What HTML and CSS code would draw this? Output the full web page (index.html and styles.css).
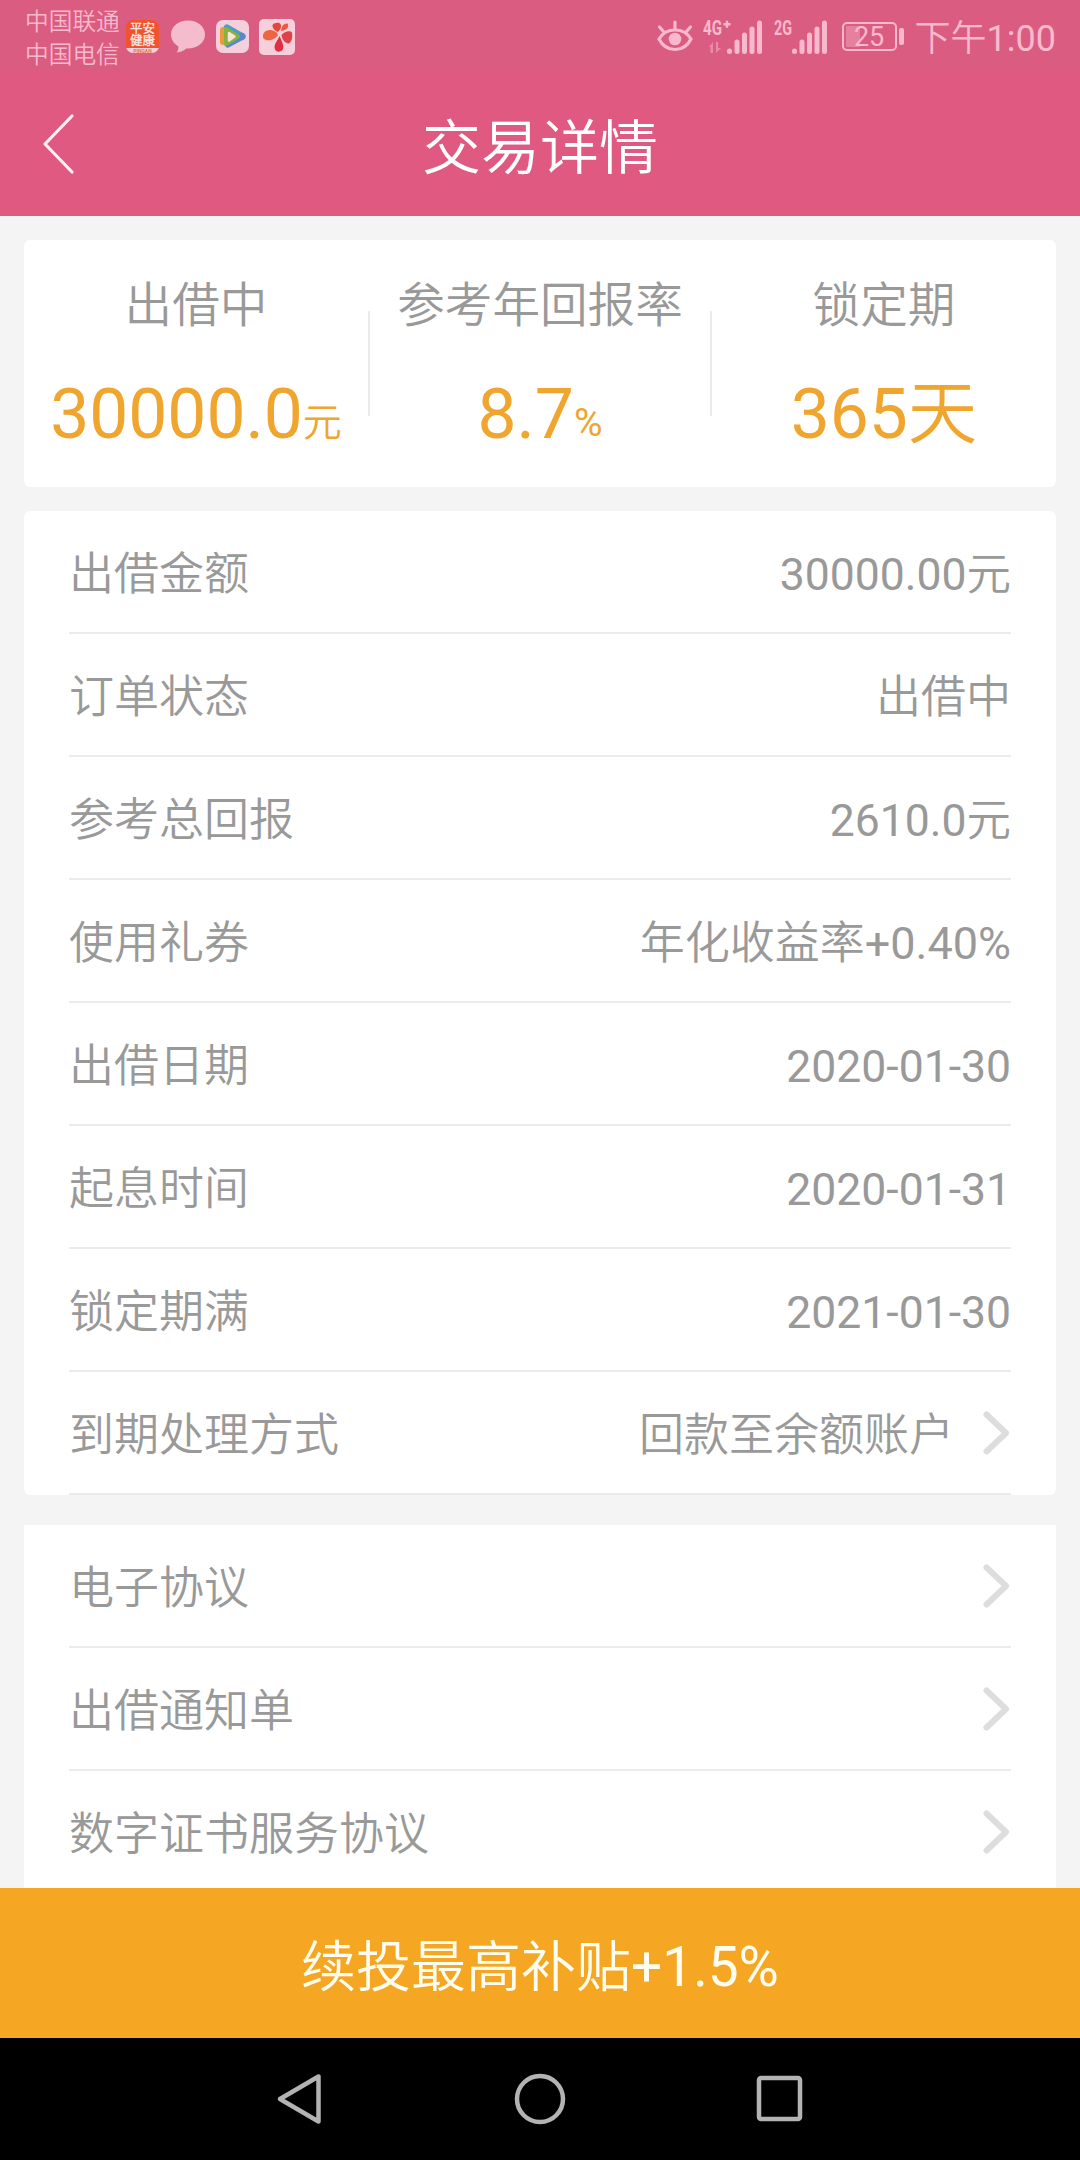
FILE: index.html
```html
<!DOCTYPE html>
<html lang="zh-CN">
<head>
  <meta charset="UTF-8" />
  <meta name="viewport" content="width=device-width, initial-scale=1.0" />
  <title>交易详情</title>
  <link rel="stylesheet" href="styles.css">
</head>
<body>

<div class="status-bar">
  <div class="carriers">
    <span>中国联通</span>
    <span>中国电信</span>
  </div>

  <div class="notifications">
    <div class="app-health">
      <span>平安</span>
      <span>健康</span>
      <small>PINGAN</small>
    </div>
    <svg class="bubble" width="34" height="33" viewBox="0 0 34 33">
      <path d="M17 0.5C7.500 0.500 0 6.500 0 14.500C0 19.500 2.800 23.700 7.300 26.200C7.600 28.500 7 30.500 5.800 32.600C9.500 32.200 13 30.700 15.300 28.600C26 29 34 22.800 34 14.500C34 6.500 26.500 0.500 17 0.500Z" fill="#f4bccd"/>
    </svg>
    <svg class="player" width="33" height="33" viewBox="0 0 33 33">
      <rect width="33" height="33" rx="7" fill="#f6cfdc"/>
      <path d="M11 8L26 16.500" stroke="#4f9bc4" stroke-width="7" stroke-linecap="round"/>
      <path d="M26 16.500L12 24" stroke="#5a86cc" stroke-width="7" stroke-linecap="round"/>
      <path d="M7 10V22" stroke="#ee9a3c" stroke-width="6" stroke-linecap="round"/>
      <path d="M10 9L22 16.500L10 24Z" fill="#86b23e" stroke="#86b23e" stroke-width="4" stroke-linejoin="round"/>
      <path d="M13 13L18.500 16.500L13 20.500Z" fill="#f9e3d8" stroke="#f9e3d8" stroke-width="2.500" stroke-linejoin="round"/>
    </svg>
    <svg class="pinwheel" width="36" height="36" viewBox="0 0 36 36">
      <rect width="36" height="36" rx="5" fill="#f6cfdc"/>
      <path d="M19 13C16 12 13 9 13.500 6C15 3.500 20 3 21.500 5C23 8 21 11 19 13Z" fill="#e2493b"/>
      <path d="M22 12C22.500 8 24 4 28.500 4.500C30.500 8 28 11 22 12Z" fill="#ea5a3c"/>
      <path d="M19 16C16 21 8 23 4.500 19.500C2.500 15 6 10.500 12 11C16 12 18 13 19 16Z" fill="#ee6640"/>
      <path d="M22.500 16C26 12 31 11.500 33 13.500C34 18 32.500 23 30 24.500C25 24 23 20 22.500 16Z" fill="#dd4348"/>
      <path d="M20.500 17C22 21 26 27 23.500 31C20.500 34 15.500 33 15.500 28C16 23 19 21 20.500 17Z" fill="#e0303f"/>
    </svg>
  </div>

  <div class="system">
    <svg class="eye" width="36" height="33" viewBox="0 0 36 33">
      <g fill="none" stroke="#f8b9ce" stroke-width="3.200" stroke-linecap="round">
        <path d="M2 19C9 7 27 7 34 19C27 33 9 33 2 19Z"/>
        <path d="M18 2V9M2.500 7L7 12M33.500 7L29 12"/>
      </g>
      <circle cx="18" cy="19" r="6.300" fill="#f8b9ce"/>
    </svg>
    <svg class="signal-4g" width="60" height="42" viewBox="0 -4 60 42">
      <text x="0" y="15" textLength="19" lengthAdjust="spacingAndGlyphs">4G</text>
      <path d="M20.500 4.300H27.500M24 0.800V7.800" class="plus"/>
      <path d="M6 27L10 22V33H7.500V27ZM15 22V28H18L13 33V22Z" fill="#e88aa8"/>
      <path d="M26.500 31.500V31M34 31.500V22M41.500 31.500V15M49 31.500V9M56.500 31.500V3" class="bars"/>
    </svg>
    <svg class="signal-2g" width="54" height="42" viewBox="0 -4 54 42">
      <text x="0" y="15" textLength="18" lengthAdjust="spacingAndGlyphs">2G</text>
      <path d="M20.500 31.500V31M28 31.500V22M35.500 31.500V15M43 31.500V9M50.500 31.500V3" class="bars"/>
    </svg>
    <div class="battery"><span>25</span></div>
    <div class="time">下午1:00</div>
  </div>
</div>

<header class="title-bar">
  <svg class="back" width="36" height="64" viewBox="0 0 36 64">
    <path d="M31 4L4 32L31 60" fill="none" stroke="#fff0f5" stroke-width="3.200" stroke-linecap="round" stroke-linejoin="round"/>
  </svg>
  <h1>交易详情</h1>
</header>

<main>
  <section class="card summary">
    <div class="item">
      <p>出借中</p>
      <strong>30000.0<small>元</small></strong>
    </div>
    <div class="item">
      <p>参考年回报率</p>
      <strong>8.7<small>%</small></strong>
    </div>
    <div class="item">
      <p>锁定期</p>
      <strong>365天</strong>
    </div>
  </section>

  <ul class="card details">
    <li><span>出借金额</span><span class="num">30000.00元</span></li>
    <li><span>订单状态</span><span>出借中</span></li>
    <li><span>参考总回报</span><span class="num">2610.0元</span></li>
    <li><span>使用礼券</span><span>年化收益率+0.40%</span></li>
    <li><span>出借日期</span><span class="num">2020-01-30</span></li>
    <li><span>起息时间</span><span class="num">2020-01-31</span></li>
    <li><span>锁定期满</span><span class="num">2021-01-30</span></li>
    <li>
      <span>到期处理方式</span><span>回款至余额账户</span>
      <svg class="arrow" width="28" height="44" viewBox="0 0 28 44"><path d="M3.500 3.500L23 22L3.500 40.500"/></svg>
    </li>
  </ul>

  <ul class="card links">
    <li><span>电子协议</span><svg class="arrow" width="28" height="44" viewBox="0 0 28 44"><path d="M3.500 3.500L23 22L3.500 40.500"/></svg></li>
    <li><span>出借通知单</span><svg class="arrow" width="28" height="44" viewBox="0 0 28 44"><path d="M3.500 3.500L23 22L3.500 40.500"/></svg></li>
    <li><span>数字证书服务协议</span><svg class="arrow" width="28" height="44" viewBox="0 0 28 44"><path d="M3.500 3.500L23 22L3.500 40.500"/></svg></li>
  </ul>
</main>

<button class="renew">续投最高补贴+1.5%</button>

<nav class="nav-bar">
  <svg width="50" height="54" viewBox="0 0 50 54"><path d="M43.500 4.500V49.500L5 27Z"/></svg>
  <svg width="54" height="54" viewBox="0 0 54 54"><circle cx="27" cy="27" r="23"/></svg>
  <svg width="50" height="50" viewBox="0 0 50 50"><rect x="4" y="4" width="41" height="41" rx="2"/></svg>
</nav>

</body>
</html>
```
FILE: styles.css
```css
:root {
  --pink: #df5980;
  --status: #db5c81;
  --status-text: #f8b9ce;
  --orange: #f5a623;
  --amount: #efa52e;
  --grey: #999;
  --line: #ebebeb;
}

* {
  box-sizing: border-box;
}

body {
  margin: 0;
  height: 2160px;
  display: flex;
  flex-direction: column;
  overflow: hidden;
  background: #f4f4f4;
  color: var(--grey);
  font-family: Roboto, "Noto Sans CJK SC DemiLight", "Noto Sans CJK SC", sans-serif;
}

/* status bar */
.status-bar {
  flex: none;
  height: 72px;
  padding: 0 24px 0 25px;
  display: flex;
  background: var(--status);
  color: var(--status-text);
}

.carriers {
  width: 101px;
  padding-top: 6px;
  display: flex;
  flex-direction: column;
  font-size: 23.7px;
  line-height: 33px;
}

.notifications {
  display: flex;
  align-items: center;
  gap: 11px;
  height: 73px;
}

.app-health {
  width: 33px;
  height: 33px;
  padding-top: 3px;
  border-radius: 7px;
  overflow: hidden;
  display: flex;
  flex-direction: column;
  align-items: center;
  background: #ef5330;
  color: #fbe0dc;
  font-size: 12.5px;
  font-weight: 700;
  line-height: 12px;
}

.app-health small {
  width: 33px;
  margin-top: 1px;
  background: #f6cfdc;
  color: #e8704f;
  font-size: 5px;
  line-height: 6px;
  text-align: center;
}

.bubble {
  margin-left: 1px;
}

.pinwheel {
  margin-left: -1px;
}

.system {
  margin-left: auto;
  height: 73px;
  display: flex;
  align-items: center;
}

.system text {
  fill: var(--status-text);
  font-size: 20px;
  font-weight: 700;
}

.bars {
  fill: none;
  stroke: var(--status-text);
  stroke-width: 5;
  stroke-linecap: round;
}

.plus {
  stroke: var(--status-text);
  stroke-width: 2.4;
}

.eye {
  margin-right: 10px;
}

.signal-4g {
  margin-right: 11px;
}

.signal-2g {
  margin-right: 14px;
}

.battery {
  position: relative;
  width: 55px;
  height: 29px;
  border: 2px solid var(--status-text);
  border-radius: 5px;
  background: linear-gradient(#e5819f, #e5819f) 2px 2px / 14px 21px no-repeat;
  font-size: 27px;
  line-height: 27px;
  text-align: center;
}

.battery::after {
  content: "";
  position: absolute;
  right: -9px;
  top: 4px;
  width: 5px;
  height: 17px;
  border-radius: 2px;
  background: var(--status-text);
}

.time {
  margin: 0 0 4px 18px;
  font-size: 36px;
}

/* title */
.title-bar {
  flex: none;
  height: 144px;
  padding: 0 41px;
  display: grid;
  grid-template-columns: 36px 1fr 36px;
  align-items: center;
  background: var(--pink);
  color: #fff;
}

.title-bar h1 {
  margin: 0 0 1px;
  font-size: 59px;
  font-weight: 400;
  text-align: center;
}

/* content */
main {
  flex: 1;
  min-height: 0;
  padding: 24px 24px 0;
  overflow: hidden;
}

.card {
  margin: 0 0 24px;
  border-radius: 6px;
  background: #fff;
}

.summary {
  height: 247px;
  display: grid;
  grid-template-columns: repeat(3, 1fr);
  text-align: center;
}

.item {
  position: relative;
  padding-top: 36px;
}

.item + .item::before {
  content: "";
  position: absolute;
  left: 0;
  top: 71px;
  width: 2px;
  height: 105px;
  background: var(--line);
}

.item:last-child::before {
  left: -2px;
}

.item p {
  margin: 0;
  font-size: 47.6px;
  line-height: 60px;
}

.item strong {
  display: block;
  margin-top: 38px;
  color: var(--amount);
  font-size: 69.5px;
  font-weight: 400;
  line-height: 82px;
  white-space: nowrap;
}

.item small {
  position: relative;
  top: -2px;
  font-size: 39px;
  line-height: 1;
}

ul.card {
  padding: 0 45px;
  list-style: none;
}

.card li {
  height: 123px;
  display: flex;
  align-items: baseline;
  border-bottom: 2px solid var(--line);
  font-size: 45px;
  line-height: 127px;
}

.card li span:nth-child(2) {
  margin-left: auto;
}

.card li .num {
  font-size: 44.5px;
}

.arrow {
  align-self: center;
  margin-left: auto;
}

.details .arrow {
  margin-left: 29px;
}

.details {
  margin-bottom: 30px;
}

.links {
  border-radius: 0;
}

.arrow path {
  fill: none;
  stroke: #ddd;
  stroke-width: 6;
  stroke-linecap: round;
  stroke-linejoin: round;
}

/* bottom */
.renew {
  flex: none;
  height: 150px;
  padding: 0 0 3px;
  border: none;
  background: var(--orange);
  color: #fffdf0;
  font: inherit;
  font-size: 55px;
}

.nav-bar {
  flex: none;
  height: 122px;
  padding: 0 180px;
  display: grid;
  grid-template-columns: repeat(3, 1fr);
  place-items: center;
  background: #000;
}

.nav-bar svg {
  fill: none;
  stroke: #b3b3b3;
  stroke-width: 4.5;
  stroke-linejoin: round;
}
```
